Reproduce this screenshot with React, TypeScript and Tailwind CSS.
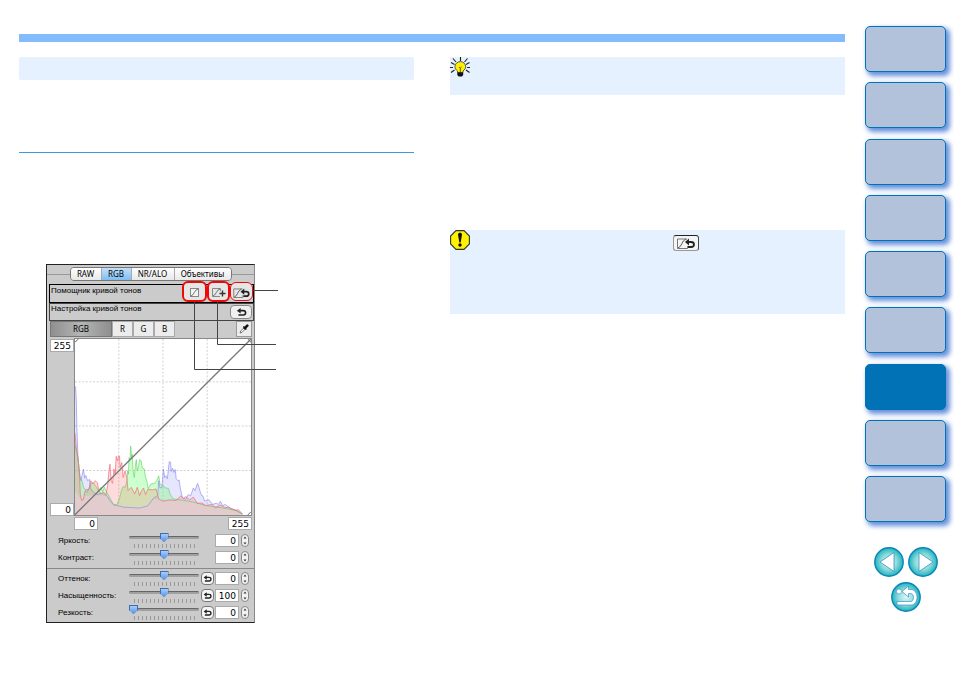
import React from 'react';

const RED =
  '104,296 108,340 113,370 117,410 120,480 124,500 130,496 133,476 138,466 146,468 152,440 158,450 165,440 172,446 176,470 184,480 190,474 198,482 203,455 206,420 210,390 214,440 218,448 222,405 226,420 229,366 233,380 236,364 239,366 241,400 246,385 250,430 256,410 261,430 265,470 275,460 285,480 293,460 300,485 306,470 312,462 318,482 325,466 340,468 350,465 358,495 370,502 390,498 410,500 425,486 432,494 440,488 452,498 463,490 475,508 490,508 500,515 520,512 530,522 545,514 560,522 570,520 590,530 600,528 612,541';

const GREEN =
  '104,330 108,350 113,370 118,430 124,436 130,460 140,476 152,450 160,446 168,458 175,470 183,460 188,474 193,460 200,474 207,486 214,500 222,514 232,512 240,490 246,466 250,458 256,460 262,440 264,410 266,420 268,370 271,376 273,335 276,372 278,360 280,410 284,430 287,395 290,376 293,410 297,396 300,376 305,380 308,402 314,404 318,430 322,440 326,464 334,450 345,448 352,440 358,425 362,450 370,456 380,462 388,464 392,480 402,495 430,499 460,504 500,515 560,524 590,530 612,541';

const BLUE =
  '104,155 106,155 108,200 110,290 113,370 117,410 122,440 126,420 130,405 133,432 137,424 142,440 148,436 151,462 157,472 170,482 186,478 200,485 210,500 220,512 235,516 250,520 300,523 325,516 335,502 343,492 355,485 358,440 362,462 368,460 372,404 376,430 380,425 384,434 387,410 390,382 394,384 396,412 400,402 404,415 408,406 411,434 416,440 420,438 424,466 430,492 440,496 448,482 455,486 463,462 468,470 476,448 480,460 484,474 488,485 492,486 497,502 510,498 522,512 532,508 540,512 545,502 552,516 560,512 575,524 595,530 612,541';

// area that all three channels share
const OVERLAP =
  '104,470 120,496 135,486 170,484 200,486 222,514 250,520 300,523 325,516 345,496 358,496 370,502 410,500 440,499 475,508 500,516 545,518 590,530 612,541';

const chapters = [1, 2, 3, 4, 5, 6, 7, 8, 9];
const ACTIVE_CHAPTER = 7;

function CurveIcon() {
  return (
    <svg viewBox="0 0 9 9" className="h-[9px] w-[9px]" fill="none" aria-hidden="true">
      <rect x="0.5" y="0.5" width="8" height="8" fill="#f4f4f4" stroke="#888" />
      <path d="M1 8 C4 7.5 4.5 1.5 8 1" stroke="#555" strokeWidth="0.8" />
    </svg>
  );
}

function CurvePlusIcon() {
  return (
    <svg viewBox="0 0 14 9" className="h-[9px] w-[14px]" fill="none" aria-hidden="true">
      <path d="M8.5 3 V0.5 H0.5 V8.5 H8" stroke="#888" />
      <path d="M1 8 C4 7.5 4.5 1.5 8 1" stroke="#555" strokeWidth="0.8" />
      <path d="M7.5 5.5 H13.5 M10.5 2.5 V8.5" stroke="#333" strokeWidth="1.4" />
    </svg>
  );
}

function CurveResetIcon({ className = 'h-[10px] w-[17px]' }: { className?: string }) {
  return (
    <svg viewBox="0 0 18 11" className={className} fill="none" aria-hidden="true">
      <path d="M10 1 H0.5 V10.5 H10.5 V8" stroke="#777" />
      <path d="M1 10 C5 9 4.5 2.5 9 1" stroke="#555" />
      <path d="M11.5 4 H14 C18 4 18 9 14 9 H11" stroke="#222" strokeWidth="1.8" />
      <path d="M12 0.5 L8 4 L12 7.5 Z" fill="#222" />
    </svg>
  );
}

function UndoIcon({ className }: { className: string }) {
  return (
    <svg viewBox="0 0 12 9" className={className} fill="none" aria-hidden="true">
      <path d="M3.5 3 H8 C11.5 3 11.5 7.8 8 7.8 H2.5" stroke="#222" strokeWidth="1.8" />
      <path d="M5 0 L0.8 3 L5 6.2 Z" fill="#222" />
    </svg>
  );
}

function DropperIcon() {
  return (
    <svg viewBox="0 0 10 10" className="h-[10px] w-[10px]" fill="none" aria-hidden="true">
      <path d="M1 9 L1.7 7 L5 3.7 L6.3 5 L3 8.3 Z" fill="#fff" stroke="#555" strokeWidth="0.8" />
      <path d="M4.4 2.6 L7.4 5.6" stroke="#111" strokeWidth="1.4" />
      <path d="M5.8 4.2 L8.3 1.7" stroke="#111" strokeWidth="2.6" strokeLinecap="round" />
    </svg>
  );
}

function BulbIcon() {
  return (
    <svg viewBox="0 0 20 20" className="h-5 w-5" fill="none" aria-hidden="true">
      <path
        d="M10.5 0 V4 M0 10.5 H3 M17 10.5 H20 M3 1.5 L6 5 M17.5 1.5 L14.5 5 M1 5.5 L4.5 7.5 M19.5 5.5 L16 7.5 M1 15.5 L4.5 13 M19.5 15.5 L16 13"
        stroke="#222"
        strokeWidth="1.1"
      />
      <path
        d="M7.5 15.5 V14 C5.8 12.6 4.9 11.3 4.9 9.8 A5.4 5.2 0 0 1 15.7 9.8 C15.7 11.3 14.8 12.6 13 14 V15.5 Z"
        fill="#ffef00"
        stroke="#555"
      />
      <path d="M9 10 L10.3 11 L11.6 10 M10.3 11 V15" stroke="#6b6200" />
      <path d="M7.3 15.5 H13.2 V18 L12 19.6 H8.6 L7.3 18 Z" fill="#111" />
    </svg>
  );
}

function CautionIcon() {
  return (
    <svg viewBox="0 0 20 20" className="h-5 w-5" aria-hidden="true">
      <path
        d="M6 0.6 H14 L19.4 6 V14 L14 19.4 H6 L0.6 14 V6 Z"
        fill="#fff200"
        stroke="#333"
        strokeWidth="1.1"
      />
      <path d="M8 4.5 C8 2.3 12 2.3 12 4.5 L10.7 12.5 H9.3 Z" fill="#111" />
      <circle cx="10" cy="15" r="1.7" fill="#111" />
    </svg>
  );
}

function RoundIcon({ id, children }: { id: string; children: React.ReactNode }) {
  return (
    <svg viewBox="0 0 30 30" className="h-[30px] w-[30px]" aria-hidden="true">
      <defs>
        <radialGradient id={id}>
          <stop offset="0" stopColor="#e0f5f5" />
          <stop offset="0.55" stopColor="#8fdbdc" />
          <stop offset="1" stopColor="#1fb4ba" />
        </radialGradient>
      </defs>
      <circle cx="15" cy="15" r="14.2" fill={`url(#${id})`} stroke="#0a84bd" strokeWidth="1.4" />
      {children}
    </svg>
  );
}

function Histogram() {
  return (
    <svg
      viewBox="104 10 534 534"
      preserveAspectRatio="none"
      className="h-[178px] min-w-0 flex-1 border border-[#888] bg-white"
      aria-hidden="true"
    >
      <path
        d="M237 10 V544 M371 10 V544 M505 10 V544 M104 140 H638 M104 274 H638 M104 409 H638"
        stroke="#cfcfcf"
        strokeWidth="3"
        strokeDasharray="6 5"
      />
      <polygon points={`104,544 ${BLUE} 612,544`} fill="#8080ff" fillOpacity="0.2" />
      <polygon points={`104,544 ${GREEN} 612,544`} fill="#70ff70" fillOpacity="0.34" />
      <polygon points={`104,544 ${RED} 612,544`} fill="#ff6060" fillOpacity="0.22" />
      <polygon points={`104,544 ${OVERLAP} 612,544`} fill="#e6cccf" fillOpacity="0.9" />
      <polyline points={BLUE} fill="none" stroke="#8b8bf0" strokeWidth="2.5" strokeOpacity="0.8" />
      <polyline points={GREEN} fill="none" stroke="#55cc55" strokeWidth="2.5" strokeOpacity="0.7" />
      <polyline points={RED} fill="none" stroke="#f27080" strokeWidth="2.5" strokeOpacity="0.9" />
      <path d="M104 543 L638 10" stroke="#777" strokeWidth="4" />
      <path d="M104 20 L114 10 M628 10 L638 20 M628 544 L638 534" stroke="#666" strokeWidth="3" />
    </svg>
  );
}

function NumberBox({ label, value, id }: { label?: string; value: string; id?: string }) {
  return (
    <input
      id={id}
      type="text"
      aria-label={label}
      defaultValue={value}
      className="h-[13px] w-6 shrink-0 border border-[#aaa] bg-white pr-[2px] text-right font-['DejaVu_Sans',sans-serif] text-[9px] leading-none text-black outline-none"
    />
  );
}

type AdjustProps = { id: string; label: string; value: string; position: number; reset?: boolean };

function AdjustRow({ id, label, value, position, reset }: AdjustProps) {
  return (
    <div className="flex h-[17px] items-center pr-[5px] pl-[11px]">
      <label
        htmlFor={id}
        className="w-[71px] font-['Liberation_Sans',sans-serif] text-[8px] leading-none whitespace-nowrap"
      >
        {label}
      </label>
      <div className="flex h-4 w-[70px] flex-col">
        <input
          type="range"
          id={id}
          defaultValue={position}
          className="h-[9px] w-full appearance-none bg-transparent [&::-webkit-slider-runnable-track]:h-[3px] [&::-webkit-slider-runnable-track]:rounded-full [&::-webkit-slider-runnable-track]:border-t [&::-webkit-slider-runnable-track]:border-[#666] [&::-webkit-slider-runnable-track]:bg-[#a0a0a0] [&::-webkit-slider-thumb]:-mt-[4px] [&::-webkit-slider-thumb]:h-[9px] [&::-webkit-slider-thumb]:w-[9px] [&::-webkit-slider-thumb]:appearance-none [&::-webkit-slider-thumb]:border [&::-webkit-slider-thumb]:border-[#3f6cb0] [&::-webkit-slider-thumb]:bg-linear-to-b [&::-webkit-slider-thumb]:from-[#a8cdf8] [&::-webkit-slider-thumb]:to-[#5a97e6] [&::-webkit-slider-thumb]:[clip-path:polygon(0_0,100%_0,100%_60%,60%_100%,40%_100%,0_60%)]"
        />
        <svg viewBox="0 0 70 4" className="mt-[2px] h-1 w-[70px]" aria-hidden="true">
          <path d="M5 2 H66" stroke="#999" strokeWidth="4" strokeDasharray="1 3" />
        </svg>
      </div>
      <div className="flex w-[15px] justify-end">
        {reset && (
          <button
            type="button"
            aria-label={`${label} сброс`}
            className="flex h-[13px] w-[13px] items-center justify-center rounded-[4px] border border-[#777] bg-[#f5f5f5]"
          >
            <UndoIcon className="h-[7px] w-[9px]" />
          </button>
        )}
      </div>
      <div className="ml-auto flex items-center gap-[2px]">
        <NumberBox label={label} value={value} />
        <button
          type="button"
          aria-label={`${label} шаг`}
          className="flex h-[13px] w-2 items-center justify-center rounded-[4px] border border-[#888] bg-[#f2f2f2]"
        >
          <svg viewBox="0 0 4 9" className="h-[9px] w-1" aria-hidden="true">
            <path d="M2 0.5 L3.5 2.5 H0.5 Z M2 8.5 L3.5 6.5 H0.5 Z" fill="#333" />
          </svg>
        </button>
      </div>
    </div>
  );
}

function ToolPalette() {
  const tabs = [
    { name: 'RAW', width: 'w-[31px]' },
    { name: 'RGB', width: 'w-[30px]' },
    { name: 'NR/ALO', width: 'w-[43px]' },
    { name: 'Объективы', width: 'w-[56px]' },
  ];

  return (
    <div className="relative ml-[27px] w-[209px] border border-[#222] border-r-[#888] bg-[#cbcbcb] font-['Noto_Sans',sans-serif] text-black">
      {/* Tabs */}
      <div className="flex h-[19px] items-center pb-px">
        <div className="h-px flex-1 bg-[#999]" />
        <div className="flex h-[14px] overflow-hidden rounded-[4px] border border-[#777]">
          {tabs.map((tab) => (
            <button
              type="button"
              key={tab.name}
              className={`${tab.width} border-r border-[#aaa] text-[8px] leading-none last:border-r-0 ${
                tab.name === 'RGB'
                  ? 'bg-linear-to-b from-[#c4e0fa] to-[#7fbcf2]'
                  : 'bg-linear-to-b from-white to-[#e8e8e8]'
              }`}
            >
              {tab.name}
            </button>
          ))}
        </div>
        <div className="h-px flex-1 bg-[#999]" />
      </div>

      {/* Tone curve rows */}
      <div className="ml-[2px] flex h-[19px] items-start border border-black pl-px">
        <span className="flex-1 pt-px font-['Liberation_Sans',sans-serif] text-[8px] leading-[10px] whitespace-nowrap">
          Помощник кривой тонов
        </span>
        <div className="-mt-1 flex">
          <button
            type="button"
            aria-label="Кривая"
            className="flex h-[21px] w-[25px] items-center justify-center rounded-[6px] border-2 border-[#f00808] bg-[#e6e6e6] pt-[2px]"
          >
            <CurveIcon />
          </button>
          <button
            type="button"
            aria-label="Кривая плюс"
            className="flex h-[21px] w-[23px] items-center justify-center rounded-[6px] border-2 border-[#f00808] bg-[#e6e6e6] pt-[2px]"
          >
            <CurvePlusIcon />
          </button>
          <button
            type="button"
            aria-label="Сброс кривой"
            className="mt-px flex h-[19px] w-[23px] items-center justify-center rounded-[6px] border border-[#f00808] bg-[#e6e6e6] pt-[2px]"
          >
            <CurveResetIcon />
          </button>
        </div>
      </div>
      <div className="ml-[2px] flex h-[18px] items-start border border-[#444] pr-px pl-px">
        <span className="flex-1 font-['Liberation_Sans',sans-serif] text-[8px] leading-[10px] whitespace-nowrap">
          Настройка кривой тонов
        </span>
        <button
          type="button"
          aria-label="Сброс"
          className="mt-px flex h-[14px] w-[22px] items-center justify-center rounded-[4px] border border-[#888] bg-[#f0f0f0]"
        >
          <UndoIcon className="h-[8px] w-[11px]" />
        </button>
      </div>

      {/* Channels */}
      <div className="flex h-4 pr-[2px] pl-[3px] text-[8px] leading-none">
        <button
          type="button"
          className="w-[62px] border border-[#777] bg-linear-to-r from-[#8f8f8f] via-[#b5b5b5] to-[#8f8f8f]"
        >
          RGB
        </button>
        {['R', 'G', 'B'].map((channel) => (
          <button type="button" key={channel} className="w-[21px] border border-[#aaa] bg-[#ececec]">
            {channel}
          </button>
        ))}
        <button
          type="button"
          aria-label="Пипетка"
          className="ml-auto flex w-4 items-center justify-center border border-[#999] bg-[#ececec]"
        >
          <DropperIcon />
        </button>
      </div>

      {/* Curve */}
      <div className="mt-px flex pr-[2px] pl-[3px]">
        <div className="flex flex-col justify-between pt-px">
          <NumberBox label="Выход макс." value="255" />
          <NumberBox label="Выход мин." value="0" />
        </div>
        <Histogram />
      </div>
      <div className="flex justify-between pt-px pr-[2px] pl-[27px]">
        <NumberBox label="Вход мин." value="0" />
        <NumberBox label="Вход макс." value="255" />
      </div>

      {/* Adjustments */}
      <div className="pt-[2px]">
        <AdjustRow id="brightness" label="Яркость:" value="0" position={50} />
        <AdjustRow id="contrast" label="Контраст:" value="0" position={50} />
      </div>
      <div className="mt-[2px] border-t border-[#888] pt-px pb-px">
        <AdjustRow id="hue" label="Оттенок:" value="0" position={50} reset />
        <AdjustRow id="saturation" label="Насыщенность:" value="100" position={50} reset />
        <AdjustRow id="sharpness" label="Резкость:" value="0" position={0} reset />
      </div>

      {/* Leader lines */}
      <svg
        viewBox="0 0 232 110"
        className="pointer-events-none absolute top-0 left-0 h-[110px] w-[232px]"
        fill="none"
        stroke="#444"
        aria-hidden="true"
      >
        <path d="M206 25.5 H231 M170.5 37 V79.5 H229 M147.5 37 V104.5 H229" />
      </svg>
    </div>
  );
}

function Sidebar() {
  return (
    <nav className="mr-2 ml-5 w-[81px] shrink-0 pt-[26px]">
      <div className="flex h-[496px] flex-col justify-between">
        {chapters.map((chapter) => (
          <button
            type="button"
            key={chapter}
            aria-label={`Глава ${chapter}`}
            className={`h-[46px] rounded-[5px] border border-[#0072b5] shadow-[3px_3px_5px_1px_#6590dc] ${
              chapter === ACTIVE_CHAPTER ? 'bg-[#0072b5]' : 'bg-[#b2c2da]'
            }`}
          />
        ))}
      </div>
      <div className="mt-[25px] flex flex-wrap justify-center gap-x-1 gap-y-[5px]">
        <button type="button" aria-label="Назад">
          <RoundIcon id="round-prev">
            <path d="M20 5.5 V24.5 L6 15 Z" fill="#fff" stroke="#3a8fc4" strokeWidth="0.8" />
          </RoundIcon>
        </button>
        <button type="button" aria-label="Вперед">
          <RoundIcon id="round-next">
            <path d="M11 5.5 V24.5 L25 15 Z" fill="#fff" stroke="#3a8fc4" strokeWidth="0.8" />
          </RoundIcon>
        </button>
        <button type="button" aria-label="Вернуться">
          <RoundIcon id="round-back">
            <circle cx="8" cy="9.5" r="2.5" fill="#fff" stroke="#3a8fc4" strokeWidth="0.6" />
            <path
              d="M11 9.5 L17.5 4 V7.5 H20 C28 7.5 28 23 20 23 H6 V19.5 H19.5 C23.5 19.5 23.5 11.5 19.5 11.5 H17.5 V15 Z"
              fill="#fff"
              stroke="#3a8fc4"
              strokeWidth="0.7"
            />
          </RoundIcon>
        </button>
      </div>
    </nav>
  );
}

export default function App() {
  return (
    <div className="flex min-h-screen bg-white">
      <main className="min-w-0 flex-1 pt-[34px] pl-[19px]">
        <div className="h-2 bg-[#82bcfd]" />
        <div className="mt-[15px] grid grid-cols-2 gap-9">
          <section>
            <div className="h-[23px] rounded-[2px] bg-[#e5f1fe]" />
            <div className="mt-[72px] h-px bg-[#3c9be0]" />
            <div className="mt-[111px]">
              <ToolPalette />
            </div>
          </section>
          <section>
            <div className="h-[38px] bg-[#e5f1fe]">
              <BulbIcon />
            </div>
            <div className="mt-[135px] flex h-[84px] items-start bg-[#e5f1fe]">
              <CautionIcon />
              <button
                type="button"
                aria-label="Сброс кривой"
                className="mt-[5px] ml-[203px] flex h-4 w-[26px] items-center justify-center rounded-[3px] border border-[#999] border-t-[#222] border-r-[#444] bg-[#f4f4f4]"
              >
                <CurveResetIcon className="h-[11px] w-[18px]" />
              </button>
            </div>
          </section>
        </div>
      </main>
      <Sidebar />
    </div>
  );
}
